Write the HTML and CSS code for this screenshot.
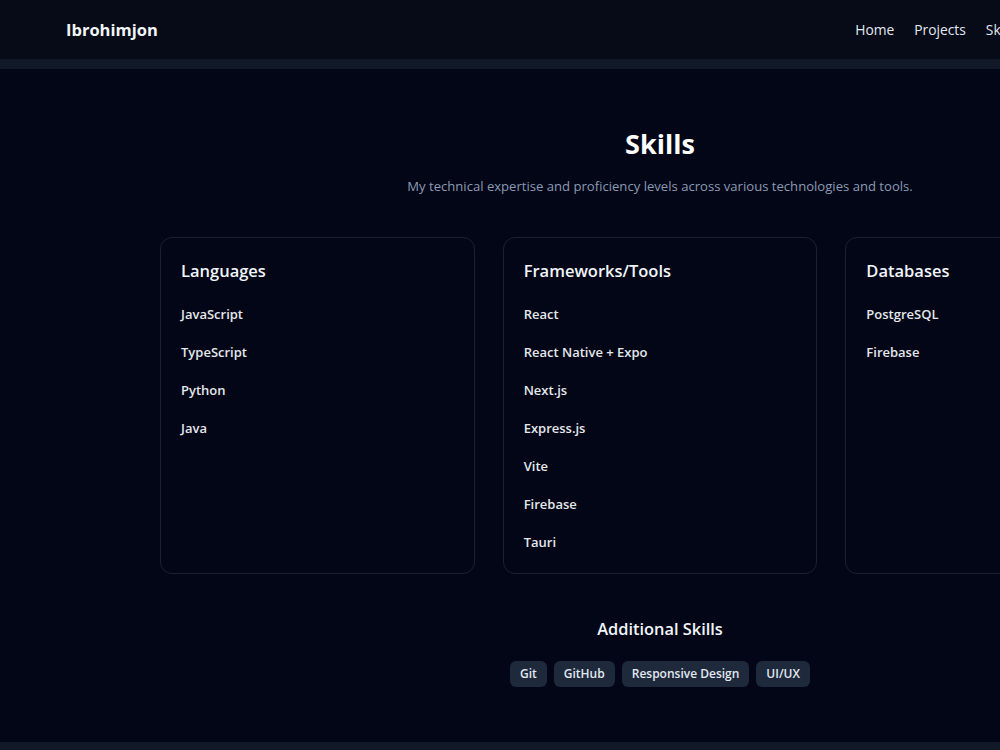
FILE: index.html
```html
<!DOCTYPE html>
<html lang="en">
<head>
	<meta charset="utf-8">
	<title>Ibrohimjon - Skills</title>
	<link rel="stylesheet" href="styles.css">
</head>
<body>
	<div class="page">
		<header class="topbar">
			<a class="brand" href="#">Ibrohimjon</a>
			<nav class="menu">
				<a href="#">Home</a>
				<a href="#">Projects</a>
				<a href="#">Skills</a>
				<a href="#">Experience</a>
				<a href="#">Contact</a>
				<button class="theme" type="button" aria-label="Toggle theme">
					<svg width="18" height="18" viewBox="0 0 24 24" fill="none" stroke="currentColor" stroke-width="2" stroke-linecap="round"><circle cx="12" cy="12" r="4"/><path d="M12 2v2M12 20v2M4.9 4.9l1.4 1.4M17.7 17.7l1.4 1.4M2 12h2M20 12h2M4.9 19.1l1.4-1.4M17.7 6.3l1.4-1.4"/></svg>
				</button>
			</nav>
		</header>
		<div class="band"></div>

		<main class="skills">
			<h2 class="title">Skills</h2>
			<p class="lead">My technical expertise and proficiency levels across various technologies and tools.</p>

			<div class="grid">
				<section class="card">
					<h3>Languages</h3>
					<ul>
						<li>JavaScript</li>
						<li>TypeScript</li>
						<li>Python</li>
						<li>Java</li>
					</ul>
				</section>
				<section class="card">
					<h3>Frameworks/Tools</h3>
					<ul>
						<li>React</li>
						<li>React Native + Expo</li>
						<li>Next.js</li>
						<li>Express.js</li>
						<li>Vite</li>
						<li>Firebase</li>
						<li>Tauri</li>
					</ul>
				</section>
				<section class="card">
					<h3>Databases</h3>
					<ul>
						<li>PostgreSQL</li>
						<li>Firebase</li>
					</ul>
				</section>
			</div>

			<h3 class="extra-title">Additional Skills</h3>
			<div class="pills">
				<span>Git</span>
				<span>GitHub</span>
				<span>Responsive Design</span>
				<span>UI/UX</span>
			</div>
		</main>

		<footer class="footer">
			<p>&copy; 2024 Ibrohimjon. All rights reserved.</p>
		</footer>
	</div>
</body>
</html>
```

FILE: styles.css
```css
html { overflow-x: hidden; scrollbar-width: none; background: #020617; }
body { margin: 0; font-family: "Open Sans", "Noto Sans", sans-serif; color: #f8fafc; background: #020617; }
.page { width: 1320px; }
a { color: inherit; text-decoration: none; }

/* header */
.topbar {
	height: 59px;
	padding: 0 66px;
	display: flex;
	align-items: center;
	justify-content: space-between;
	background: #060b17;
}
.brand { font-size: 16.5px; font-weight: 700; color: #f1f5f9; }
.menu { display: flex; align-items: center; gap: 20px; font-size: 13.8px; color: #e2e8f0; }
.theme {
	width: 36px;
	height: 36px;
	margin-left: 20px;
	display: flex;
	align-items: center;
	justify-content: center;
	border: 0;
	border-radius: 8px;
	background: #1e293b;
	color: #e2e8f0;
}
.band { height: 10px; background: #111827; }

/* skills section */
.skills { padding: 57px 0 55px; text-align: center; }
.title { margin: 0; font-size: 27px; line-height: 36px; font-weight: 700; color: #fff; }
.lead { margin: 13px 0 0; font-size: 13.1px; line-height: 22px; color: #8b9bb3; }

.grid {
	width: 1000px;
	margin: 40px auto 0;
	display: grid;
	grid-template-columns: repeat(3, 1fr);
	gap: 28px;
	text-align: left;
}
.card {
	border: 1px solid #1a2232;
	border-radius: 12px;
	padding: 19px 20px 21px;
}
.card h3 { margin: 0 0 19px; font-size: 16.5px; line-height: 28px; font-weight: 600; color: #f1f5f9; }
.card ul { margin: 0; padding: 0; list-style: none; display: flex; flex-direction: column; gap: 18px; }
.card li { font-size: 13px; line-height: 20px; font-weight: 600; color: #e5e7eb; }

.extra-title { margin: 41px 0 0; font-size: 16.4px; line-height: 28px; font-weight: 600; color: #f1f5f9; }
.pills { margin-top: 18px; display: flex; justify-content: center; gap: 7px; }
.pills span {
	padding: 3px 10px;
	font-size: 12px;
	line-height: 20px;
	font-weight: 600;
	color: #e2e8f0;
	background: #1e293b;
	border-radius: 6px;
}

.footer { padding: 30px 0; background: #111827; text-align: center; font-size: 14px; color: #94a3b8; }
.footer p { margin: 0; }
```
